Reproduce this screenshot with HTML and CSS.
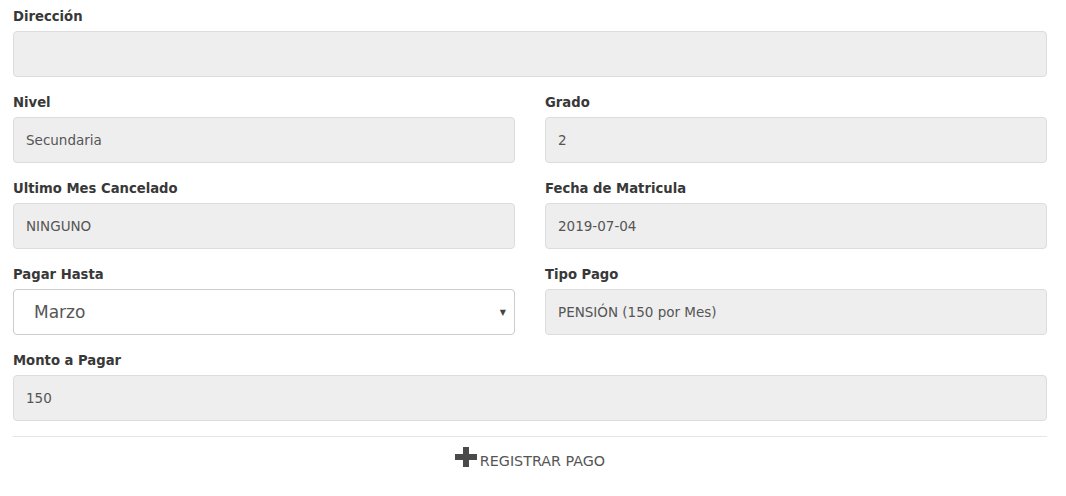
FILE: index.html
```html
<!DOCTYPE html>
<html lang="es">
<head>
<meta charset="utf-8">
<link rel="stylesheet" href="styles.css">
</head>
<body>
<div class="form">
  <div class="group">
    <label class="label">Dirección</label>
    <div class="input"></div>
  </div>
  <div class="row">
    <div class="group">
      <label class="label">Nivel</label>
      <div class="input">Secundaria</div>
    </div>
    <div class="group">
      <label class="label">Grado</label>
      <div class="input">2</div>
    </div>
  </div>
  <div class="row">
    <div class="group">
      <label class="label">Ultimo Mes Cancelado</label>
      <div class="input">NINGUNO</div>
    </div>
    <div class="group">
      <label class="label">Fecha de Matricula</label>
      <div class="input">2019-07-04</div>
    </div>
  </div>
  <div class="row">
    <div class="group">
      <label class="label">Pagar Hasta</label>
      <div class="select"><span>Marzo</span><span class="arrow">▼</span></div>
    </div>
    <div class="group">
      <label class="label">Tipo Pago</label>
      <div class="input">PENSIÓN (150 por Mes)</div>
    </div>
  </div>
  <div class="group">
    <label class="label">Monto a Pagar</label>
    <div class="input">150</div>
  </div>
  <div class="footer">
    <button class="btn">
      <svg class="plus" width="22" height="20" viewBox="0 0 22 20"><path d="M8 0h6v7h8v6h-8v7H8v-7H0V7h8z" fill="#4a4a4a"/></svg>
      <span>REGISTRAR PAGO</span>
    </button>
  </div>
</div>
</body>
</html>
```
FILE: styles.css
```css
* { box-sizing: border-box; }
body {
  margin: 0;
  background: #fff;
  font-family: "DejaVu Sans", "Noto Sans", sans-serif;
  color: #333;
}
.form {
  padding: 6px 19px 0 13px;
}
.row {
  display: grid;
  grid-template-columns: 1fr 1fr;
  column-gap: 30px;
}
.group {
  margin-bottom: 15px;
}
.label {
  display: block;
  font-weight: 700;
  font-size: 13.2px;
  line-height: 21px;
  margin-bottom: 4px;
  color: #383838;
}
.input {
  height: 46px;
  background: #eee;
  border: 1px solid #dcdcdc;
  border-radius: 4px;
  padding: 0 12px;
  display: flex;
  align-items: center;
  font-size: 13.5px;
  color: #555;
}
.select {
  height: 46px;
  background: #fff;
  border: 1px solid #ccc;
  border-radius: 4px;
  padding: 0 8px 0 20px;
  display: flex;
  align-items: center;
  justify-content: space-between;
  font-size: 17px;
  color: #555;
}
.arrow {
  font-size: 8px;
  color: #444;
}
.footer {
  border-top: 1px solid #e5e5e5;
  display: flex;
  justify-content: center;
  padding-top: 16px;
}
.btn {
  background: none;
  border: 0;
  display: flex;
  align-items: center;
  gap: 3px;
  font-family: inherit;
  font-size: 14.3px;
  color: #555;
  padding: 0;
  margin-left: 0;
}
.plus { margin-top: -8px; }
```
